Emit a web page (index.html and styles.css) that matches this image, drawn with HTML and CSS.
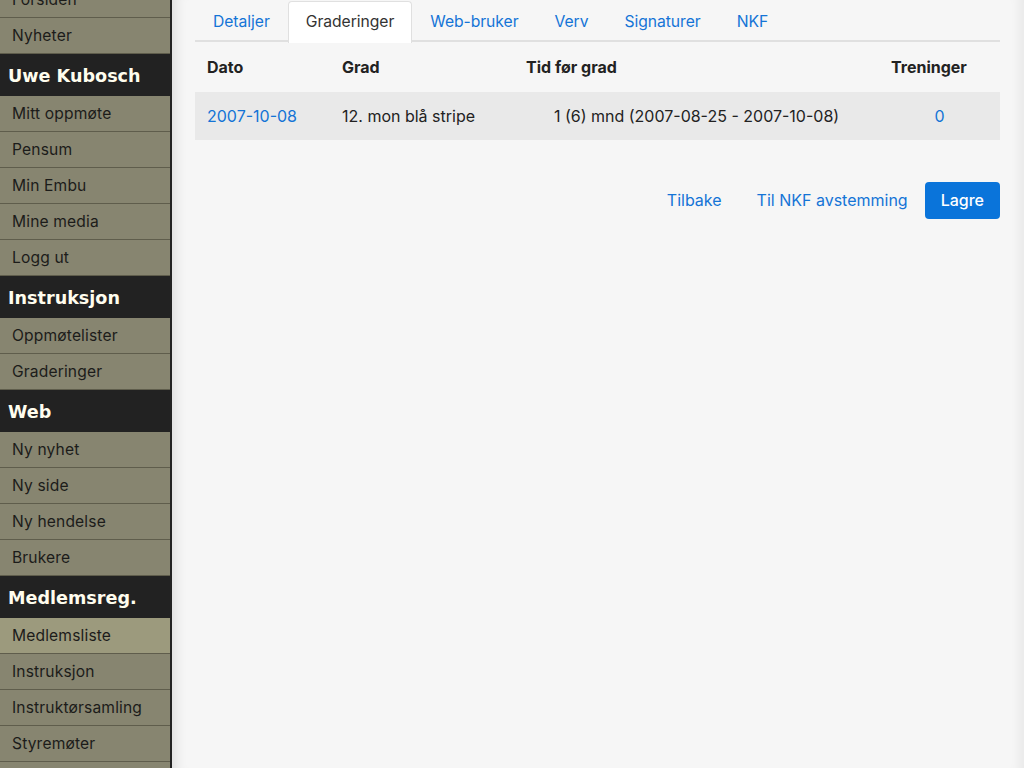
FILE: index.html
```html
<!DOCTYPE html>
<html lang="no">
<head>
<meta charset="utf-8">
<title>Medlem</title>
<link rel="stylesheet" href="styles.css">
</head>
<body>
<div class="layout">
  <nav class="sidebar">
    <ul class="menu">
      <li class="item">Forsiden</li>
      <li class="item">Nyheter</li>
      <li class="head">Uwe Kubosch</li>
      <li class="item">Mitt oppmøte</li>
      <li class="item">Pensum</li>
      <li class="item">Min Embu</li>
      <li class="item">Mine media</li>
      <li class="item">Logg ut</li>
      <li class="head">Instruksjon</li>
      <li class="item">Oppmøtelister</li>
      <li class="item">Graderinger</li>
      <li class="head">Web</li>
      <li class="item">Ny nyhet</li>
      <li class="item">Ny side</li>
      <li class="item">Ny hendelse</li>
      <li class="item">Brukere</li>
      <li class="head">Medlemsreg.</li>
      <li class="item active">Medlemsliste</li>
      <li class="item">Instruksjon</li>
      <li class="item">Instruktørsamling</li>
      <li class="item">Styremøter</li>
      <li class="item">Økonomi</li>
    </ul>
  </nav>
  <main class="main">
    <ul class="tabs">
      <li class="tab">Detaljer</li>
      <li class="tab current">Graderinger</li>
      <li class="tab">Web-bruker</li>
      <li class="tab">Verv</li>
      <li class="tab">Signaturer</li>
      <li class="tab">NKF</li>
    </ul>
    <table class="grid">
      <colgroup>
        <col class="c1"><col class="c2"><col class="c3"><col class="c4">
      </colgroup>
      <thead>
        <tr><th>Dato</th><th>Grad</th><th>Tid før grad</th><th>Treninger</th></tr>
      </thead>
      <tbody>
        <tr class="odd">
          <td><span class="link">2007-10-08</span></td>
          <td>12. mon blå stripe</td>
          <td class="center">1 (6) mnd (2007-08-25 - 2007-10-08)</td>
          <td class="center"><span class="link">0</span></td>
        </tr>
      </tbody>
    </table>
    <div class="actions">
      <span class="action">Tilbake</span>
      <span class="action">Til NKF avstemming</span>
      <span class="btn">Lagre</span>
    </div>
  </main>
</div>
</body>
</html>
```
FILE: styles.css
```css
html, body {
  margin: 0;
  padding: 0;
  height: 100%;
  overflow: hidden;
}
body {
  font-family: "Inter", "Liberation Sans", sans-serif;
  font-size: 16px;
  color: #222;
  background: #f6f6f6;
}
.layout {
  display: flex;
  height: 768px;
}
.sidebar {
  width: 170px;
  flex: none;
  background: #878570;
  border-right: 2px solid #222;
  overflow: hidden;
}
.menu {
  list-style: none;
  margin: -18px 0 0 0;
  padding: 0;
}
.item {
  height: 35px;
  line-height: 35px;
  border-bottom: 1px solid #5f5d4c;
  padding-left: 12px;
  font-size: 15.6px;
  color: #1c1c1a;
  letter-spacing: 0.15px;
}
.item.active {
  background: #9c9a7d;
}
.head {
  height: 39px;
  line-height: 39px;
  padding-top: 3px;
  background: #222;
  color: #fffdee;
  font-family: "DejaVu Sans", Verdana, sans-serif;
  font-weight: bold;
  font-size: 17.6px;
  padding-left: 8px;
}
.main {
  flex: 1;
  padding: 0 24px 0 23px;
  box-shadow: inset 14px 0 12px -10px rgba(0,0,0,0.10), inset -14px 0 12px -10px rgba(0,0,0,0.06);
}
.tabs {
  list-style: none;
  margin: 0;
  padding: 0;
  display: flex;
  border-bottom: 2px solid #e0e0e0;
  height: 40px;
  font-size: 15.7px;
  letter-spacing: -0.05px;
}
.tab {
  padding: 0 17px;
  color: #1474d6;
  line-height: 40px;
  margin-top: 1px;
  border: 1px solid transparent;
  border-bottom: none;
  border-radius: 4px 4px 0 0;
  box-sizing: border-box;
  margin-bottom: -2px;
  height: 42px;
}
.tab.current {
  background: #fff;
  color: #333;
  border-color: #e0e0e0;
}
.grid {
  width: 100%;
  border-collapse: collapse;
  table-layout: fixed;
}
.c1 { width: 135px; }
.c2 { width: 184px; }
.c3 { width: 365px; }
.c4 { width: 121px; }
.grid th {
  text-align: left;
  font-weight: bold;
  height: 50px;
  padding: 0 12px;
  color: #222;
}
.grid td {
  height: 48px;
  padding: 0 12px;
  color: #222;
}
.grid tr.odd td {
  background: #e9e9e9;
}
.center {
  text-align: center;
}
.link {
  color: #1474d6;
}
.actions {
  display: flex;
  justify-content: flex-end;
  align-items: center;
  margin-top: 41px;
}
.action {
  color: #1474d6;
  padding: 0 17.5px;
  line-height: 38px;
}
.btn {
  background: #0a74da;
  color: #fff;
  font-weight: 500;
  border-radius: 4px;
  padding: 0 16px;
  line-height: 37px;
  height: 37px;
  margin-left: -0.5px;
}
```
